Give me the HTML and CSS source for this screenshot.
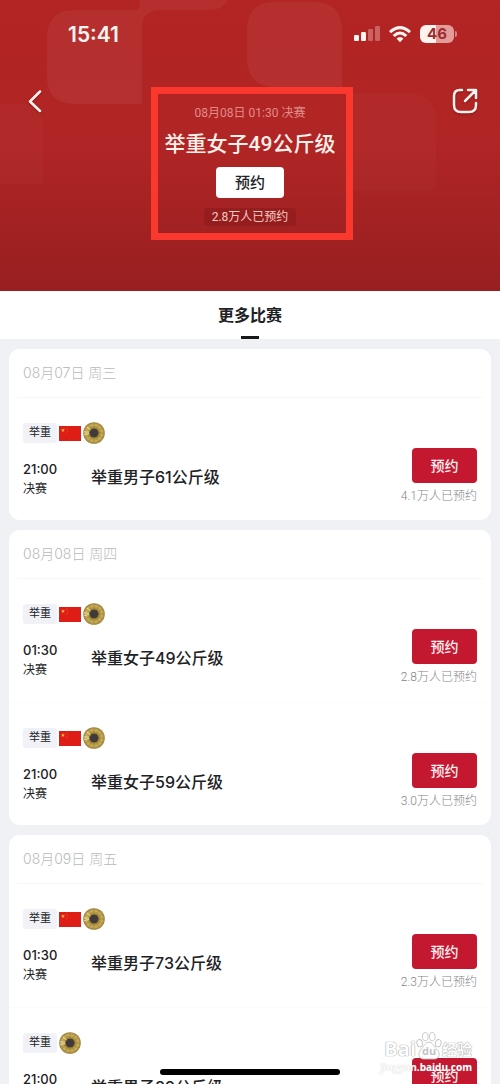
FILE: index.html
```
<!DOCTYPE html>
<html lang="zh-CN">
<head>
    <meta charset="UTF-8">
    <meta name="viewport" content="width=device-width, initial-scale=1.0">
    <title>举重女子49公斤级</title>
    <link rel="stylesheet" href="styles.css">
</head>
<body>
    <svg class="defs" width="0" height="0" aria-hidden="true">
        <defs>
            <radialGradient id="gold">
                <stop offset="0" stop-color="#3f3a38"/>
                <stop offset="0.34" stop-color="#4c4330"/>
                <stop offset="0.48" stop-color="#a98d38"/>
                <stop offset="0.75" stop-color="#c9b05c"/>
                <stop offset="1" stop-color="#9a7d38"/>
            </radialGradient>
        </defs>
        <symbol id="flag" viewBox="0 0 22 15">
            <rect width="22" height="15" fill="#df1d17"/>
            <path d="M4 2.2l.5 1.4H6l-1.2.9.5 1.4L4 5l-1.3.9.5-1.4L2 3.600h1.500z" fill="#f8c33a"/>
            <path d="M7 1.600h.8v.8H7zM8 3.200h.8V4H8zM8 5h.8v.8H8zM7 6.500h.8v.8H7z" fill="#e85a2a"/>
        </symbol>
        <symbol id="medal" viewBox="0 0 22 22">
            <circle cx="11" cy="11" r="10.800" fill="url(#gold)"/>
            <path d="M11 1v5M16 2.500l-2.500 4.200M19.600 6l-4.200 2.600M21 11h-5M19.500 16l-4.200-2.500M16 19.500l-2.500-4.200M11 21v-5M6 19.500l2.500-4.200M2.500 16l4.200-2.500M6 2.500l2.500 4.200" stroke="#7d6325" stroke-width="0.700" opacity="0.500"/>
            <path d="M1 10h5M1.200 12.500l5-1M4 5l3.500 3" stroke="#efe0a0" stroke-width="1"/>
            <path d="M8.500 7.200h5l2 3.500-2 4h-5l-2-4z" fill="#403a3a"/>
        </symbol>
    </svg>

    <div class="screen">
        <header class="hero">
            <svg class="hero-shapes" viewBox="0 0 500 291" preserveAspectRatio="none" aria-hidden="true">
                <g fill="#ffffff" fill-opacity="0.050">
                    <path d="M75 10H137Q142 4 139 0H228Q223 10 208 10H160Q142 10 142 28V104H75Q47 104 47 76V38Q47 10 75 10Z"/>
                    <path d="M275 2H314Q342 2 342 30V87H275Q247 87 247 57V30Q247 2 275 2Z"/>
                </g>
                <g fill="#ffffff" fill-opacity="0.020">
                    <path d="M353 93H408Q436 93 436 121V190H353Z"/>
                    <path d="M0 104H24Q43 104 43 124V184H0Z"/>
                </g>
            </svg>
            <div class="status">
                <span class="clock">15:41</span>
                <div class="status-icons">
                    <svg width="26" height="16" viewBox="0 0 26 16" aria-hidden="true">
                        <g fill="#fff3ef">
                            <rect x="0" y="9" width="5" height="6" rx="1.200"/>
                            <rect x="7" y="6" width="5" height="9" rx="1.200"/>
                            <rect x="14" y="3" width="5" height="12" rx="1.200" opacity="0.300"/>
                            <rect x="21" y="0" width="5" height="15" rx="1.200" opacity="0.300"/>
                        </g>
                    </svg>
                    <svg width="22" height="17" viewBox="0 0 22 17" aria-hidden="true">
                        <g fill="none" stroke="#fff3ef" stroke-width="3">
                            <path d="M1 6.200Q11-3 21 6.200"/>
                            <path d="M4.700 10Q11 4 17.300 10"/>
                        </g>
                        <path d="M7.500 12.500Q11 9.500 14.500 12.500L11 16.300Z" fill="#fff3ef"/>
                    </svg>
                    <div class="battery"><span>46</span></div>
                </div>
            </div>

            <div class="hero-main">
                <button class="icon-button" type="button" aria-label="返回">
                    <svg width="14" height="24" viewBox="0 0 14 24"><path d="M12 2.500L2 12.500l10 9.500" fill="none" stroke="#fff1ec" stroke-width="2.500" stroke-linecap="round" stroke-linejoin="round"/></svg>
                </button>
                <div class="match">
                    <p class="match-date">08月08日 01:30 决赛</p>
                    <h1>举重女子49公斤级</h1>
                    <button class="match-button" type="button">预约</button>
                    <p class="match-count">2.8万人已预约</p>
                </div>
                <button class="icon-button share" type="button" aria-label="分享">
                    <svg width="26" height="26" viewBox="0 0 26 26"><path d="M10 2H8Q2 2 2 8v9q0 7 7 7h8q7 0 7-7v-2M16 2h8v8M24 2L13 13" fill="none" stroke="#fff1ec" stroke-width="2.500" stroke-linecap="round" stroke-linejoin="round"/></svg>
                </button>
            </div>
        </header>

        <nav class="tabs">
            <a class="tab" href="#schedule">更多比赛</a>
        </nav>

        <main class="schedule" id="schedule">
            <section class="card">
                <h2>08月07日 周三</h2>
                <article class="event">
                    <div class="tags">
                        <span class="tag">举重</span>
                        <svg class="flag" role="img" aria-label="中国"><use href="#flag"/></svg>
                        <svg class="medal" role="img" aria-label="金牌赛"><use href="#medal"/></svg>
                    </div>
                    <div class="event-body">
                        <div class="when"><time>21:00</time><span>决赛</span></div>
                        <h3>举重男子61公斤级</h3>
                        <div class="reserve">
                            <button type="button">预约</button>
                            <span>4.1万人已预约</span>
                        </div>
                    </div>
                </article>
            </section>

            <section class="card">
                <h2>08月08日 周四</h2>
                <article class="event">
                    <div class="tags">
                        <span class="tag">举重</span>
                        <svg class="flag" role="img" aria-label="中国"><use href="#flag"/></svg>
                        <svg class="medal" role="img" aria-label="金牌赛"><use href="#medal"/></svg>
                    </div>
                    <div class="event-body">
                        <div class="when"><time>01:30</time><span>决赛</span></div>
                        <h3>举重女子49公斤级</h3>
                        <div class="reserve">
                            <button type="button">预约</button>
                            <span>2.8万人已预约</span>
                        </div>
                    </div>
                </article>
                <article class="event">
                    <div class="tags">
                        <span class="tag">举重</span>
                        <svg class="flag" role="img" aria-label="中国"><use href="#flag"/></svg>
                        <svg class="medal" role="img" aria-label="金牌赛"><use href="#medal"/></svg>
                    </div>
                    <div class="event-body">
                        <div class="when"><time>21:00</time><span>决赛</span></div>
                        <h3>举重女子59公斤级</h3>
                        <div class="reserve">
                            <button type="button">预约</button>
                            <span>3.0万人已预约</span>
                        </div>
                    </div>
                </article>
            </section>

            <section class="card">
                <h2>08月09日 周五</h2>
                <article class="event">
                    <div class="tags">
                        <span class="tag">举重</span>
                        <svg class="flag" role="img" aria-label="中国"><use href="#flag"/></svg>
                        <svg class="medal" role="img" aria-label="金牌赛"><use href="#medal"/></svg>
                    </div>
                    <div class="event-body">
                        <div class="when"><time>01:30</time><span>决赛</span></div>
                        <h3>举重男子73公斤级</h3>
                        <div class="reserve">
                            <button type="button">预约</button>
                            <span>2.3万人已预约</span>
                        </div>
                    </div>
                </article>
                <article class="event">
                    <div class="tags">
                        <span class="tag">举重</span>
                        <svg class="medal" role="img" aria-label="金牌赛"><use href="#medal"/></svg>
                    </div>
                    <div class="event-body">
                        <div class="when"><time>21:00</time></div>
                        <h3>举重男子89公斤级</h3>
                        <div class="reserve">
                            <button type="button">预约</button>
                        </div>
                    </div>
                </article>
            </section>
        </main>

        <div class="watermark">
            <div class="watermark-logo">
                <span class="bai">Bai</span>
                <span class="paw">
                    <svg width="26" height="29" viewBox="0 0 28 31" aria-hidden="true">
                        <g fill="#ffffff" stroke="#c4c4c4" stroke-width="1">
                            <ellipse cx="4" cy="13" rx="3" ry="4" transform="rotate(-15 4 13)"/>
                            <ellipse cx="10" cy="6" rx="3" ry="4.500"/>
                            <ellipse cx="17.500" cy="6" rx="3" ry="4.500"/>
                            <ellipse cx="24" cy="13" rx="3" ry="4" transform="rotate(15 24 13)"/>
                            <path d="M14 12c-4 0-5 4-8 7-5 5-3 11 2 11h12c5 0 7-6 2-11-3-3-4-7-8-7z"/>
                        </g>
                    </svg>
                    <i>du</i>
                </span>
                <span class="jingyan">经验</span>
            </div>
            <div class="watermark-url">jingyan.baidu.com</div>
        </div>
        <div class="home-indicator"></div>
    </div>
</body>
</html>
```
FILE: styles.css
```
* {
    box-sizing: border-box;
}
body {
    margin: 0;
    font-family: Roboto, "Noto Sans CJK SC", sans-serif;
    color: #202124;
    background: #eff1f4;
}
h1, h2, h3, p {
    margin: 0;
}
button {
    border: none;
    padding: 0;
    font-family: inherit;
    cursor: pointer;
}
.defs {
    position: absolute;
}
.screen {
    position: relative;
    height: 100vh;
    overflow: hidden;
}

/* header */
.hero {
    position: relative;
    padding-bottom: 51px;
    background: linear-gradient(#b32424 0%, #b02525 50%, #981f20 100%);
}
.hero-shapes {
    position: absolute;
    inset: 0;
    width: 100%;
    height: 100%;
}
.status {
    position: relative;
    display: flex;
    justify-content: space-between;
    align-items: center;
    padding: 22px 46px 0 68px;
    height: 46px;
    color: #fff3ef;
    font-family: Inter, sans-serif;
}
.clock {
    font-size: 21px;
    font-weight: 600;
}
.status-icons {
    display: flex;
    align-items: center;
    gap: 9px;
}
.battery {
    position: relative;
    width: 34px;
    height: 18px;
    border-radius: 6px;
    background: linear-gradient(90deg, #fff3ef 46%, #e49b99 46%);
    color: #9c2d2d;
    font-size: 15px;
    font-weight: 700;
    line-height: 18px;
    text-align: center;
}
.battery::after {
    content: "";
    position: absolute;
    right: -3px;
    top: 6px;
    width: 2px;
    height: 6px;
    border-radius: 0 2px 2px 0;
    background: #d98482;
}
.hero-main {
    position: relative;
    display: grid;
    grid-template-columns: 1fr auto 1fr;
    margin-top: 41px;
    padding: 0 22px;
}
.icon-button {
    display: flex;
    align-items: center;
    justify-self: start;
    width: 26px;
    height: 28px;
    padding-left: 6px;
    background: none;
    filter: drop-shadow(0 1px 1px rgba(80, 0, 0, 0.4));
}
.icon-button.share {
    justify-self: end;
    padding-left: 0;
}
.match {
    position: relative;
    display: flex;
    flex-direction: column;
    align-items: center;
    width: 198px;
    height: 153px;
    padding-top: 18px;
}
.match::after {
    content: "";
    position: absolute;
    inset: 0 -4px 0 0;
    border: 7px solid #fa382d;
    pointer-events: none;
}
.match-date {
    font-size: 12px;
    line-height: 16px;
    color: #e08c89;
}
.match h1 {
    margin-top: 8px;
    font-size: 21px;
    font-weight: 500;
    line-height: 30px;
    color: #fff0e9;
    white-space: nowrap;
}
.match-button {
    margin-top: 8px;
    padding-bottom: 2px;
    width: 68px;
    height: 31px;
    border-radius: 4px;
    background: #ffffff;
    color: #202124;
    font-size: 15px;
    font-weight: 500;
}
.match-count {
    margin-top: 10px;
    padding: 0 8px;
    border-radius: 4px;
    background: rgba(90, 10, 10, 0.2);
    color: #f5cbc5;
    font-size: 12px;
    line-height: 18px;
}

/* tab bar */
.tabs {
    display: flex;
    justify-content: center;
    height: 48px;
    background: #ffffff;
}
.tab {
    display: flex;
    flex-direction: column;
    align-items: center;
    justify-content: space-between;
    padding-top: 13px;
    color: #202124;
    font-size: 16px;
    font-weight: 700;
    line-height: 24px;
    text-decoration: none;
}
.tab::after {
    content: "";
    width: 18px;
    height: 3px;
    background: #17181a;
}

/* event list */
.schedule {
    display: flex;
    flex-direction: column;
    gap: 10px;
    padding: 10px 9px;
}
.card {
    border-radius: 11px;
    background: #ffffff;
}
.card h2 {
    margin-right: 8px;
    margin-left: 8px;
    padding-left: 6px;
    border-bottom: 1px solid #f7f7f8;
    color: #b9babc;
    font-family: Inter, "Noto Sans CJK SC", sans-serif;
    font-size: 14px;
    font-weight: 300;
    line-height: 48px;
}
.event {
    padding: 24px 14px 16px;
}
.event + .event {
    margin-top: 1px;
    border-top: 1px solid #fbfbfc;
}
.tags {
    display: flex;
    align-items: center;
    gap: 2px;
    height: 22px;
}
.tag {
    padding: 0 6px;
    border-radius: 3px;
    background: #f0f2f7;
    font-size: 11px;
    line-height: 20px;
}
.flag {
    width: 22px;
    height: 15px;
}
.medal {
    width: 22px;
    height: 22px;
}
.event-body {
    display: grid;
    grid-template-columns: 68px 1fr auto;
    margin-top: 4px;
    min-height: 56px;
}
.when {
    display: flex;
    flex-direction: column;
    padding-top: 11px;
    font-size: 12px;
    line-height: 20px;
}
.when time {
    font-family: Inter, sans-serif;
    font-size: 13px;
    font-weight: 500;
}
.event h3 {
    padding-top: 17px;
    font-family: Inter, "Noto Sans CJK SC", sans-serif;
    font-size: 16px;
    font-weight: 500;
    line-height: 24px;
}
.reserve {
    display: flex;
    flex-direction: column;
    align-items: flex-end;
    gap: 5px;
    color: #85868a;
    font-size: 12px;
    font-weight: 300;
    line-height: 16px;
}
.reserve button {
    padding-bottom: 2px;
    width: 65px;
    height: 35px;
    border-radius: 4px;
    background: #c41730;
    color: #fff2f2;
    font-size: 14px;
    font-weight: 500;
}

/* overlays */
.watermark {
    position: absolute;
    right: 28px;
    bottom: 10px;
    color: #ffffff;
    font-family: "Open Sans", "Noto Sans CJK SC", sans-serif;
    font-weight: 700;
    text-shadow: 0 0 1px #909090, 0 0 1px #a0a0a0;
}
.watermark-logo {
    display: flex;
    align-items: flex-end;
    justify-content: flex-end;
    height: 29px;
}
.bai {
    font-size: 20px;
    line-height: 22px;
}
.paw {
    position: relative;
    height: 29px;
}
.paw i {
    position: absolute;
    left: 6px;
    bottom: 2px;
    color: #c4c4c4;
    font-size: 11px;
    font-style: normal;
    line-height: 14px;
    text-shadow: none;
}
.jingyan {
    font-size: 15px;
    line-height: 22px;
}
.watermark-url {
    font-size: 10px;
    line-height: 14px;
    text-align: right;
    text-shadow: 0 0 1px rgba(150, 150, 150, 0.6);
}
.home-indicator {
    position: absolute;
    left: 50%;
    bottom: 9px;
    width: 36%;
    height: 6px;
    border-radius: 3px;
    background: #000000;
    transform: translateX(-50%);
}
```
